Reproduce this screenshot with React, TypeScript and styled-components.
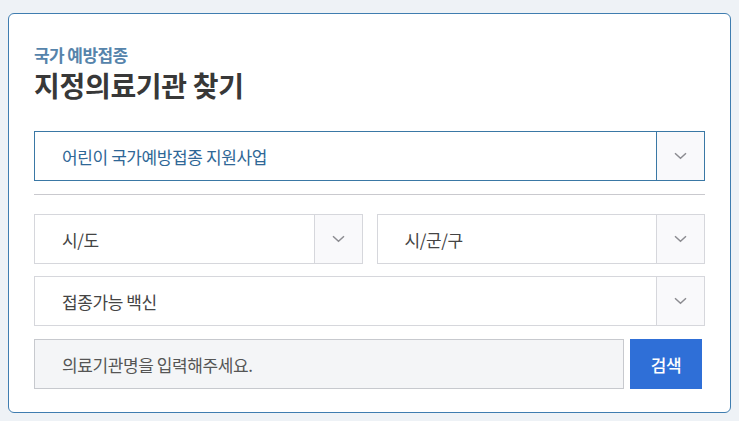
import React from 'react';
import styled, { createGlobalStyle } from 'styled-components';

const GlobalStyle = createGlobalStyle`
  html, body {
    margin: 0;
    padding: 0;
    background: #eef2f6;
  }
  body {
    font-family: "Noto Sans CJK KR", "Noto Sans", sans-serif;
  }
`;

const Page = styled.div`
  padding: 13px 8px 0 8px;
`;

const Card = styled.section`
  box-sizing: border-box;
  height: 400px;
  background: #fff;
  border: 1px solid #3f7db0;
  border-radius: 6px;
  padding: 29px 25px 0 25px;
  display: flex;
  flex-direction: column;
`;

const Eyebrow = styled.div`
  font-size: 17px;
  line-height: 23px;
  font-weight: 700;
  color: #5684ab;
  letter-spacing: -0.6px;
  margin-bottom: 1px;
`;

const Title = styled.h1`
  margin: 0;
  font-size: 28px;
  line-height: 36px;
  font-weight: 700;
  color: #383838;
  letter-spacing: -0.3px;
`;

const SelectBox = styled.div<{ $primary?: boolean }>`
  box-sizing: border-box;
  height: 50px;
  display: flex;
  border: 1px solid ${(p) => (p.$primary ? '#3a78a5' : '#d6d7dc')};
  background: #fff;
`;

const SelectLabel = styled.div<{ $primary?: boolean }>`
  flex: 1;
  display: flex;
  align-items: center;
  padding-left: 27px;
  font-size: 17px;
  letter-spacing: -0.4px;
  color: ${(p) => (p.$primary ? '#2f6796' : '#444')};
`;

const ArrowBox = styled.div<{ $primary?: boolean; $w: number }>`
  width: ${(p) => p.$w}px;
  display: flex;
  align-items: center;
  justify-content: center;
  background: #f9f9fb;
  border-left: 1px solid ${(p) => (p.$primary ? '#3a78a5' : '#d6d7dc')};
`;

const Spacer = styled.div`
  height: 28px;
`;

const Divider = styled.hr`
  border: 0;
  height: 1px;
  background: #c9c9ce;
  margin: 13px 0 19px 0;
`;

const Row = styled.div`
  display: grid;
  grid-template-columns: 1fr 1fr;
  gap: 14px;
  margin-bottom: 12px;
`;

const SearchRow = styled.div`
  display: flex;
  gap: 6px;
  margin-top: 13px;
  padding-right: 3px;
`;

const SearchInput = styled.div`
  box-sizing: border-box;
  flex: 1;
  height: 50px;
  display: flex;
  align-items: center;
  padding-left: 27px;
  background: #f4f5f7;
  border: 1px solid #c7c9ce;
  font-size: 17px;
  letter-spacing: -0.4px;
  color: #555;
`;

const SearchButton = styled.button`
  width: 72px;
  height: 50px;
  border: 0;
  background: #2f6fd7;
  color: #fff;
  font-family: inherit;
  font-size: 17px;
  font-weight: 500;
  letter-spacing: -0.3px;
  padding: 0;
`;

const Chevron = () => (
  <svg width="13" height="8" viewBox="0 0 13 8">
    <path d="M1 1.2l5.5 5L12 1.2" fill="none" stroke="#8c8c91" strokeWidth="1.5" />
  </svg>
);

const Select: React.FC<{ label: string; primary?: boolean; arrowW?: number }> = ({
  label,
  primary,
  arrowW = 47,
}) => (
  <SelectBox $primary={primary}>
    <SelectLabel $primary={primary}>{label}</SelectLabel>
    <ArrowBox $primary={primary} $w={arrowW}>
      <Chevron />
    </ArrowBox>
  </SelectBox>
);

const App: React.FC = () => (
  <Page>
    <GlobalStyle />
    <Card>
      <Eyebrow>국가 예방접종</Eyebrow>
      <Title>지정의료기관 찾기</Title>
      <Spacer />
      <Select label="어린이 국가예방접종 지원사업" primary />
      <Divider />
      <Row>
        <Select label="시/도" />
        <Select label="시/군/구" />
      </Row>
      <Select label="접종가능 백신" />
      <SearchRow>
        <SearchInput>의료기관명을 입력해주세요.</SearchInput>
        <SearchButton>검색</SearchButton>
      </SearchRow>
    </Card>
  </Page>
);

export default App;
